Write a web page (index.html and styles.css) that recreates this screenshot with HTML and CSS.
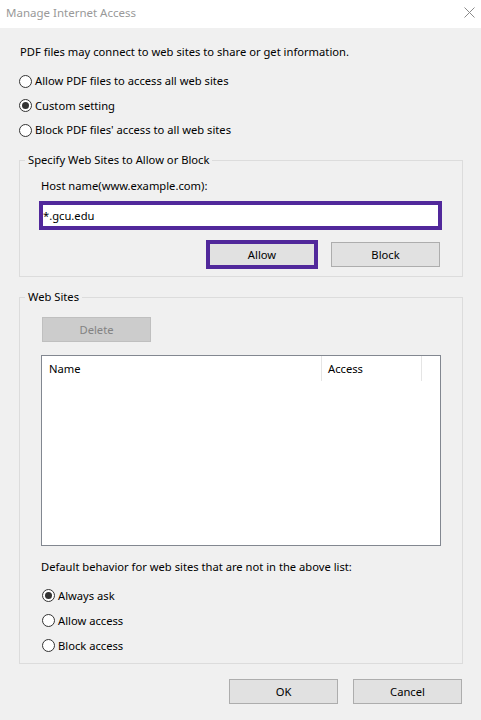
FILE: index.html
```html
<!DOCTYPE html>
<html lang="en">
<head>
<meta charset="utf-8">
<title>Manage Internet Access</title>
<link rel="stylesheet" href="styles.css">
</head>
<body>
<div class="window">
  <div class="titlebar">
    <span class="title">Manage Internet Access</span>
    <svg class="close" width="11" height="11" viewBox="0 0 11 11"><path d="M0.5 0.5 L10.5 10.5 M10.5 0.5 L0.5 10.5" stroke="#8a8a8a" stroke-width="1" fill="none"/></svg>
  </div>
  <div class="main">
    <p class="intro">PDF files may connect to web sites to share or get information.</p>
    <div class="radios top">
      <div class="radio"><span class="dot"></span><span>Allow PDF files to access all web sites</span></div>
      <div class="radio"><span class="dot on"></span><span>Custom setting</span></div>
      <div class="radio"><span class="dot"></span><span>Block PDF files' access to all web sites</span></div>
    </div>

    <fieldset class="group g1">
      <legend>Specify Web Sites to Allow or Block</legend>
      <div class="inner">
        <div class="label">Host name(www.example.com):</div>
        <div class="host">*.gcu.edu</div>
        <div class="btnrow">
          <button class="btn focus">Allow</button>
          <button class="btn">Block</button>
        </div>
      </div>
    </fieldset>

    <fieldset class="group g2">
      <legend>Web Sites</legend>
      <div class="inner">
        <button class="btn disabled">Delete</button>
        <div class="list">
          <div class="lhead">
            <div class="col name">Name</div>
            <div class="col access">Access</div>
            <div class="col rest"></div>
          </div>
        </div>
        <div class="label def">Default behavior for web sites that are not in the above list:</div>
        <div class="radios bottom">
          <div class="radio"><span class="dot on"></span><span>Always ask</span></div>
          <div class="radio"><span class="dot"></span><span>Allow access</span></div>
          <div class="radio"><span class="dot"></span><span>Block access</span></div>
        </div>
      </div>
    </fieldset>

    <div class="footer">
      <button class="btn">OK</button>
      <button class="btn">Cancel</button>
    </div>
  </div>
</div>
</body>
</html>
```

FILE: styles.css
```css
* { box-sizing: border-box; }
html, body { margin: 0; padding: 0; }
body {
  width: 481px;
  height: 720px;
  background: #f0f0f0;
  font-family: "Noto Sans", "Open Sans", sans-serif;
  font-size: 11.2px;
  color: #000;
  overflow: hidden;
}
.titlebar {
  height: 28px;
  background: #fff;
  display: flex;
  align-items: center;
  justify-content: space-between;
  padding: 0 6px 0 6px;
}
.title { color: #999; font-size: 11.5px; margin-top: -4px; }
.close { margin-top: -4px; }
.main { padding: 0 18px 0 19px; }
.intro { margin: 0; padding-top: 16px; line-height: 16px; padding-left: 1px; }
.radios.top { margin-top: 9px; }
.radio {
  height: 24.5px;
  display: flex;
  align-items: center;
  gap: 3px;
  line-height: 16px;
}
.dot {
  width: 13px; height: 13px;
  border: 1px solid #333;
  border-radius: 50%;
  background: #fff;
  display: flex; align-items: center; justify-content: center;
  flex: none;
}
.dot.on::after {
  content: "";
  width: 7px; height: 7px;
  border-radius: 50%;
  background: #333;
}
.group {
  margin: 0;
  border: 1px solid #dcdcdc;
  padding: 0;
  min-width: 0;
}
.group legend {
  margin-left: 5px;
  padding: 0 3px;
  line-height: 16px;
}
.inner { padding-left: 19px; }
.g1 { margin-top: 9.5px; padding-bottom: 9px; }
.label { line-height: 16px; padding-left: 2px; margin-top: 10px; }
.host {
  margin-top: 7px;
  width: 403px;
  height: 29px;
  border: 4px solid #51289b;
  background: #fff;
  padding-left: 0;
  line-height: 21px;
}
.btnrow {
  margin-top: 12px;
  width: 401px;
  display: flex;
  justify-content: flex-end;
  gap: 15px;
}
.btn {
  font: inherit;
  width: 109px;
  height: 25px;
  background: #e1e1e1;
  border: 1px solid #adadad;
  padding: 0;
  color: #000;
  line-height: 16px;
}
.btn.focus {
  outline: 4px solid #51289b;
  outline-offset: -2px;
  width: 108px;
}
.g2 { margin-top: 12px; padding-bottom: 5px; }
.btn.disabled {
  margin-top: 12px;
  margin-left: 3px;
  background: #cccccc;
  border-color: #bfbfbf;
  color: #838383;
  display: block;
}
.list {
  margin-top: 13px;
  margin-left: 2px;
  width: 400px;
  height: 191px;
  background: #fff;
  border: 1px solid #828790;
}
.lhead { display: flex; height: 25px; }
.col { line-height: 24px; height: 25px; padding-top: 1px; }
.col.name { width: 280px; padding-left: 7px; border-right: 1px solid #e5e5e5; }
.col.access { width: 100px; padding-left: 6px; border-right: 1px solid #e5e5e5; }
.col.rest { flex: 1; }
.label.def { margin-top: 13px; padding-left: 2px; }
.radios.bottom { margin-top: 8px; padding-left: 3px; }
.radios.bottom .radio { height: 25px; }
.footer {
  margin-top: 15px;
  display: flex;
  justify-content: flex-end;
  gap: 15px;
  padding-right: 1px;
}
```
